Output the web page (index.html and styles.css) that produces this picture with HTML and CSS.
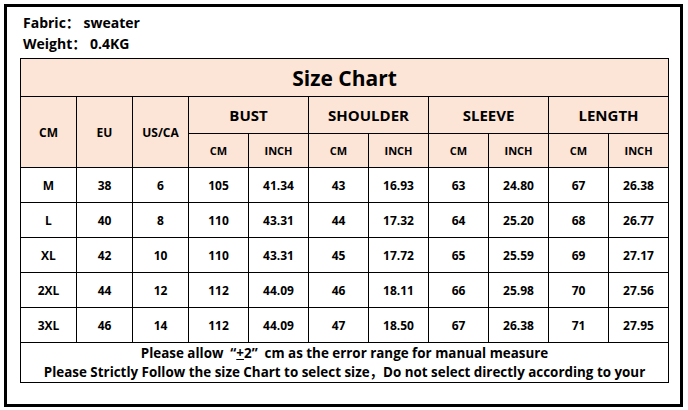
FILE: index.html
```html
<!DOCTYPE html>
<html>
<head>
<meta charset="utf-8">
<link rel="stylesheet" href="styles.css">
</head>
<body>
<div class="frame">
  <div class="info">
    <div>Fabric： sweater</div>
    <div>Weight： 0.4KG</div>
  </div>
  <table class="chart">
    <colgroup>
      <col class="c56"><col class="c56"><col class="c56">
      <col class="c60"><col class="c60"><col class="c60"><col class="c60">
      <col class="c60"><col class="c60"><col class="c60"><col class="c60">
    </colgroup>
    <tr class="title"><td colspan="11">Size Chart</td></tr>
    <tr class="h1">
      <td rowspan="2" class="hs">CM</td>
      <td rowspan="2" class="hs">EU</td>
      <td rowspan="2" class="hs">US/CA</td>
      <td colspan="2">BUST</td>
      <td colspan="2">SHOULDER</td>
      <td colspan="2">SLEEVE</td>
      <td colspan="2">LENGTH</td>
    </tr>
    <tr class="h2">
      <td>CM</td><td>INCH</td><td>CM</td><td>INCH</td>
      <td>CM</td><td>INCH</td><td>CM</td><td>INCH</td>
    </tr>
    <tr class="row"><td>M</td><td>38</td><td>6</td><td>105</td><td>41.34</td><td>43</td><td>16.93</td><td>63</td><td>24.80</td><td>67</td><td>26.38</td></tr>
    <tr class="row"><td>L</td><td>40</td><td>8</td><td>110</td><td>43.31</td><td>44</td><td>17.32</td><td>64</td><td>25.20</td><td>68</td><td>26.77</td></tr>
    <tr class="row"><td>XL</td><td>42</td><td>10</td><td>110</td><td>43.31</td><td>45</td><td>17.72</td><td>65</td><td>25.59</td><td>69</td><td>27.17</td></tr>
    <tr class="row"><td>2XL</td><td>44</td><td>12</td><td>112</td><td>44.09</td><td>46</td><td>18.11</td><td>66</td><td>25.98</td><td>70</td><td>27.56</td></tr>
    <tr class="row"><td>3XL</td><td>46</td><td>14</td><td>112</td><td>44.09</td><td>47</td><td>18.50</td><td>67</td><td>26.38</td><td>71</td><td>27.95</td></tr>
    <tr class="foot">
      <td colspan="11">
        <div class="fl">Please allow &nbsp;“<span class="u">+</span>2” &nbsp;cm as the error range for manual measure</div>
        <div class="fl">Please Strictly Follow the size Chart to select size，Do not select directly according to your</div>
      </td>
    </tr>
  </table>
</div>
</body>
</html>
```

FILE: styles.css
```css
html, body {
  margin: 0;
  padding: 0;
  background: #fff;
}
body {
  font-family: "Open Sans", "Noto Sans CJK SC", sans-serif;
  font-weight: 700;
  color: #000;
}
.frame {
  box-sizing: border-box;
  margin: 4px 0 0 4px;
  width: 679px;
  height: 403px;
  border: 3px solid #000;
  padding: 5px 0 0 13px;
}
.info {
  font-size: 14px;
  line-height: 21px;
  padding-left: 3px;
  height: 46px;
}
.chart {
  border-collapse: collapse;
  table-layout: fixed;
  width: 649px;
}
.c56 { width: 56px; }
.c60 { width: 60px; }
.chart td {
  border: 1px solid #000;
  text-align: center;
  vertical-align: middle;
  padding: 0;
  font-size: 12px;
  white-space: nowrap;
  overflow: hidden;
}
.title td, .h1 td, .h2 td {
  background: #fce4d6;
}
.title { height: 38px; }
.title td { font-size: 21px; }
.h1 { height: 37px; }
.h1 td { font-size: 15px; }
.h1 td.hs { font-size: 12px; }
.h2 { height: 34px; }
.h2 td { font-size: 11px; }
.row { height: 35px; }
.foot { height: 40px; }
.foot td { font-size: 13.4px; }
.fl { line-height: 19px; }
.u { text-decoration: underline; }
```
